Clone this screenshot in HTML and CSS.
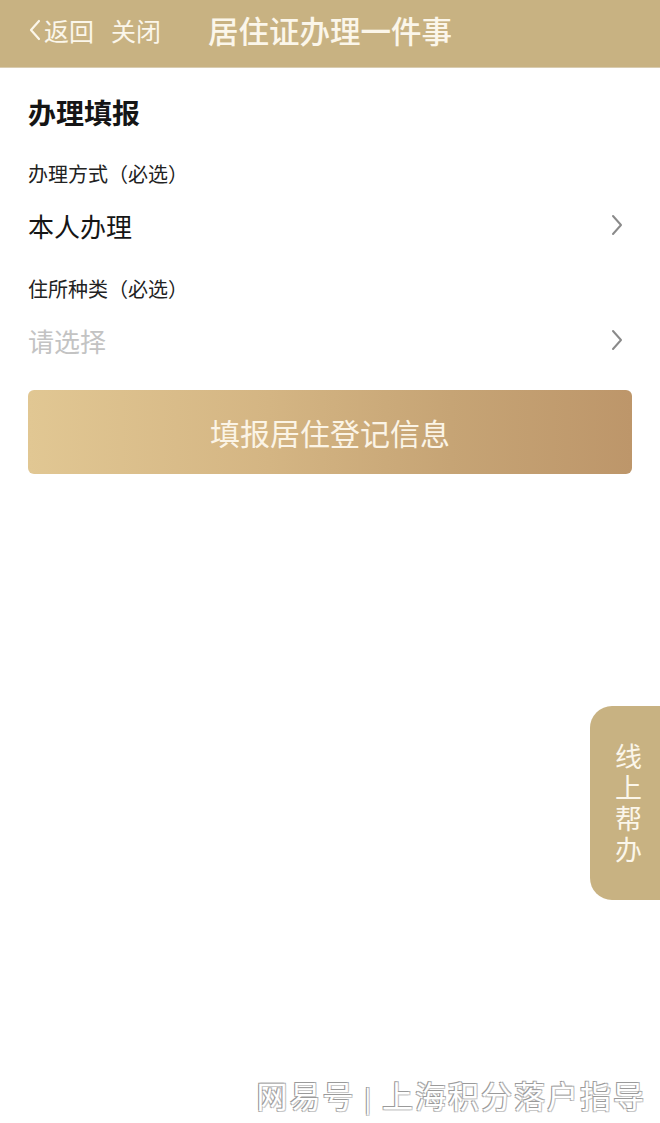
FILE: index.html
```html
<!DOCTYPE html>
<html lang="zh">
<head>
<meta charset="utf-8">
<link rel="stylesheet" href="styles.css">
</head>
<body>
<div class="page">
  <header class="topbar">
    <div class="nav">
      <span class="back"><svg class="back-icon" width="14" height="24" viewBox="0 0 14 24"><path d="M11 3 L3 12 L11 21" fill="none" stroke="currentColor" stroke-width="2.2" stroke-linecap="round" stroke-linejoin="round"/></svg>返回</span>
      <span class="close">关闭</span>
    </div>
    <h1 class="title">居住证办理一件事</h1>
  </header>
  <main class="content">
    <h2 class="section-title">办理填报</h2>
    <div class="field">
      <div class="field-label">办理方式（必选）</div>
      <div class="field-value">
        <span>本人办理</span>
        <svg class="chev" width="14" height="24" viewBox="0 0 14 24"><path d="M3 3 L11 12 L3 21" fill="none" stroke="currentColor" stroke-width="2" stroke-linecap="round" stroke-linejoin="round"/></svg>
      </div>
    </div>
    <div class="field">
      <div class="field-label">住所种类（必选）</div>
      <div class="field-value placeholder">
        <span>请选择</span>
        <svg class="chev" width="14" height="24" viewBox="0 0 14 24"><path d="M3 3 L11 12 L3 21" fill="none" stroke="currentColor" stroke-width="2" stroke-linecap="round" stroke-linejoin="round"/></svg>
      </div>
    </div>
    <button class="submit">填报居住登记信息</button>
  </main>
  <div class="help-tab">
    <span class="help-text">线上帮办</span>
  </div>
  <div class="watermark">网易号 <span class="sep">|</span> 上海积分落户指导</div>
</div>
</body>
</html>
```

FILE: styles.css
```css
* { box-sizing: border-box; margin: 0; padding: 0; }
html, body { width: 660px; height: 1123px; background: #ffffff; }
body {
  font-family: "Noto Sans CJK SC", "Noto Sans", sans-serif;
  color: #1a1a1a;
  overflow: hidden;
}
.page { position: relative; width: 660px; height: 1123px; }

.topbar {
  height: 68px;
  background: #c8b282;
  display: flex;
  align-items: center;
  padding-left: 28px;
  padding-bottom: 8px;
  color: #fbf6ea;
  border-bottom: 1px solid #d9ccb0;
}
.nav { display: flex; align-items: center; gap: 17px; font-size: 25px; }
.back { display: flex; align-items: center; }
.back-icon { margin-right: 2px; }
.title {
  margin-left: 47px;
  font-size: 30.5px;
  font-weight: 500;
}

.content { padding: 24px 28px 0 28px; }
.section-title {
  font-size: 28px;
  font-weight: 700;
  line-height: 40px;
  color: #151515;
}
.field-label {
  font-size: 20px;
  line-height: 30px;
  margin-top: 27px;
  color: #222;
}
.field-value {
  display: flex;
  justify-content: space-between;
  align-items: center;
  height: 44px;
  margin-top: 14px;
  font-size: 26px;
  color: #151515;
  padding-right: 8px;
}
.field-value .chev { color: #8a8a8a; }
.field-value.placeholder { color: #c3c3c3; }

.submit {
  display: block;
  width: 604px;
  height: 84px;
  margin-top: 28px;
  border: none;
  border-radius: 6px;
  background: linear-gradient(90deg, #e1c793 0%, #d4b583 40%, #c6a475 70%, #bd966a 100%);
  color: #fbf4e6;
  font-family: "Noto Sans CJK SC", sans-serif;
  font-size: 30px;
}

.help-tab {
  position: absolute;
  right: 0;
  top: 706px;
  width: 70px;
  height: 194px;
  background: #c8b282;
  border-radius: 22px 0 0 22px;
  display: flex;
  align-items: center;
  justify-content: center;
  padding-left: 6px;
  color: #fbf6ea;
}
.help-text {
  writing-mode: vertical-rl;
  text-orientation: upright;
  font-size: 27px;
  letter-spacing: 4px;
  line-height: 30px;
  margin-top: 4px;
}

.watermark {
  position: absolute;
  right: 14px;
  top: 1072px;
  font-size: 31px;
  color: #ffffff;
  text-shadow: -1px -1px 0 #9a9a9a, 1px 1px 0 #c8c8c8, 1px -1px 0 #b0b0b0, -1px 1px 0 #b0b0b0;
  letter-spacing: 2px;
}
.watermark .sep { font-size: 24px; }
```
